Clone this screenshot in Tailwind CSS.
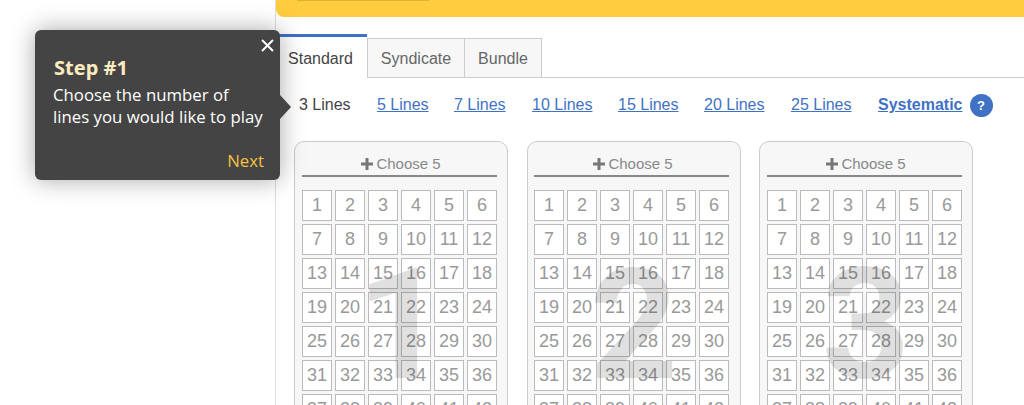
<!DOCTYPE html>
<html lang="en">
<head>
    <meta charset="UTF-8">
    <title>Lotto</title>
    <script src="https://cdn.jsdelivr.net/npm/@tailwindcss/browser@4"></script>
</head>
<body class="bg-white h-[405px] overflow-hidden font-['Liberation_Sans',sans-serif]">
    <div class="relative h-[405px] overflow-hidden pl-[275px]">
        <!-- Main column -->
        <main class="h-full border-l border-[#ddd]">
            <!-- Yellow banner -->
            <div class="h-[17px] bg-[#ffcc40] rounded-bl-[8px] pl-[21px] overflow-hidden">
                <div class="w-[132px] h-[1px] bg-[#e0b030]"></div>
            </div>

            <!-- Tabs -->
            <div class="mt-[17px] h-[44px] flex items-end border-b border-[#ccc] text-[16px] text-[#666]">
                <div class="w-[91px] h-[44px] -mb-px bg-white border-t-[3px] border-[#3f72c4] flex items-center justify-center pt-[2px] pr-[2px] text-[#444]">Standard</div>
                <div class="w-[98px] h-[39px] bg-[#f7f7f7] border border-[#ccc] border-b-0 flex items-center justify-center pt-[2px]">Syndicate</div>
                <div class="w-[78px] h-[39px] -ml-px bg-[#f7f7f7] border border-[#ccc] border-b-0 flex items-center justify-center pt-[2px]">Bundle</div>
            </div>

            <!-- Lines -->
            <div class="mt-[16px] h-[22px] flex items-center text-[16px] text-[#3f72c4] pl-[23px]">
                <span class="w-[78px] text-[#444]">3 Lines</span>
                <a class="underline w-[77px]">5 Lines</a>
                <a class="underline w-[78px]">7 Lines</a>
                <a class="underline w-[86px]">10 Lines</a>
                <a class="underline w-[86px]">15 Lines</a>
                <a class="underline w-[87px]">20 Lines</a>
                <a class="underline w-[87px]">25 Lines</a>
                <a class="underline font-bold">Systematic</a>
                <span class="ml-[7px] mt-[1px] w-[23px] h-[23px] rounded-full bg-[#3f72c4] text-white text-[13px] font-bold flex items-center justify-center">?</span>
            </div>

            <!-- Line cards -->
            <div id="cards" class="mt-[25px] pl-[18px] flex"></div>
        </main>

        <!-- Tooltip -->
        <div class="absolute left-[35px] top-[30px] w-[245px] h-[150px] bg-[#444] rounded-[6px] shadow-[0_0_24px_rgba(0,0,0,0.35)] text-white font-['Open_Sans',sans-serif]">
            <div class="absolute right-[-11px] top-[65px] w-0 h-0 border-y-[12px] border-y-transparent border-l-[11px] border-l-[#444]"></div>
            <svg class="absolute left-[226px] top-[9px]" width="13" height="13" viewBox="0 0 13 13"><path d="M1 1L12 12M12 1L1 12" stroke="#fff" stroke-width="2"/></svg>
            <div class="pl-[19px] pt-[25px] font-['Noto_Sans',sans-serif] font-bold text-[20px] leading-[26px] text-[#fdebc0]">Step #1</div>
            <div class="pl-[18px] text-[16.8px] leading-[22px] mt-[3px]">Choose the number of<br>lines you would like to play</div>
            <div class="absolute right-[16px] bottom-[7px] text-[16.8px] text-[#f5c242]">Next</div>
        </div>
    </div>

    <script>
        // Build the three number cards
        const cards = document.getElementById('cards');
        [
            { n: 1, spacing: 'px-[7px]' },
            { n: 2, spacing: 'ml-[19px] px-[6px]' },
            { n: 3, spacing: 'ml-[18px] px-[7px]' },
        ].forEach(({ n, spacing }) => {
            let cells = '';
            for (let i = 1; i <= 42; i++) {
                cells += `<div class="w-[30px] h-[31px] bg-white border border-[#bbb] flex items-center justify-center">${i}</div>`;
            }
            cards.innerHTML += `
                <div class="relative w-[214px] h-[300px] shrink-0 bg-[#f7f7f7] border border-[#ccc] rounded-[10px] ${spacing}">
                    <div class="w-[195px] h-[35px] pt-[11px] pl-[3px] border-b-2 border-[#888] flex items-center justify-center text-[15px] text-[#888]">
                        <svg class="mr-[3px]" width="12" height="12" viewBox="0 0 12 12"><path d="M4.5 0h3v4.5H12v3H7.500V12h-3V7.500H0v-3h4.500z" fill="#777"/></svg>Choose 5
                    </div>
                    <div class="mt-[13px] grid grid-cols-[repeat(6,30px)] gap-[3px] text-[18px] text-[#999]">
                        ${cells}
                    </div>
                    <div class="absolute left-0 right-0 top-[109px] text-center font-['Roboto',sans-serif] text-[154px] leading-[150px] font-bold text-black/12">${n}</div>
                </div>`;
        });
    </script>
</body>
</html>
